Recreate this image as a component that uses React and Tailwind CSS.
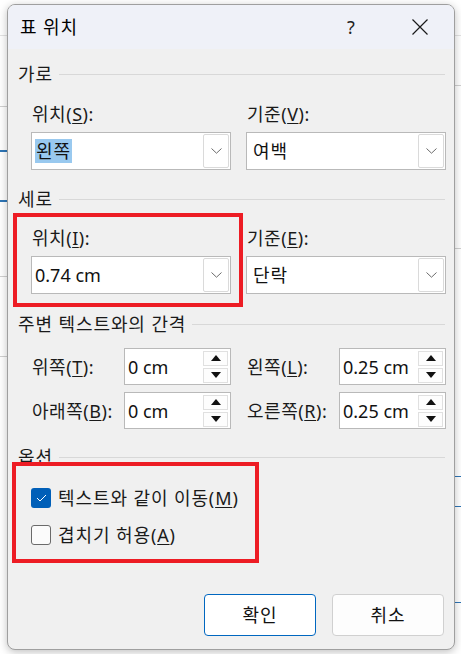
import React from "react";

const font = { fontFamily: '"Noto Sans", "Noto Sans CJK KR", sans-serif' };

const U = ({ children }) => <span className="underline underline-offset-2">{children}</span>;

const Chevron = () => (
  <svg width="11" height="6" viewBox="0 0 11 6" fill="none">
    <path d="M0.5 0.5 L5.5 5.2 L10.5 0.5" stroke="#6b6b6b" strokeWidth="1" />
  </svg>
);

const SectionHeader = ({ title, className = "" }) => (
  <div className={`flex items-center h-[24px] gap-[6px] ${className}`}>
    <span className="text-[18px] leading-none text-[#1a1a1a] tracking-[0.05em]">{title}</span>
    <div className="flex-1 h-px bg-[#d8d8d8] mt-[1px]" />
  </div>
);

const Combo = ({ value, selected, pad = "pl-[3px]", ko }) => (
  <div className="flex items-center h-[38px] w-[200px] bg-white border border-[#b9b9b9]">
    <div className={`flex-1 ${pad}`}>
      <span className={`text-[18px] leading-[24px] text-[#111] ${ko ? "tracking-[0.05em]" : ""} ${selected ? "bg-[#99c9ef] px-[1px]" : ""}`}>{value}</span>
    </div>
    <div className="flex items-center justify-center w-[26px] h-[34px] mr-[1px] border border-[#dadada] rounded-[2px] bg-white">
      <Chevron />
    </div>
  </div>
);

const Field = ({ label, children }) => (
  <div className="flex flex-col w-[200px]">
    <div className="h-[24px] pl-[1px] text-[18px] leading-[24px] text-[#1a1a1a] tracking-[0.03em]">{label}</div>
    <div className="mt-[6px]">{children}</div>
  </div>
);

const Tri = ({ up }) => (
  <svg width="10" height="6" viewBox="0 0 10 6">
    <path d={up ? "M0 6 L5 0 L10 6 Z" : "M0 0 L5 6 L10 0 Z"} fill="#111" />
  </svg>
);

const Spinner = ({ value }) => (
  <div className="flex items-center h-[37px] w-[107px] bg-white border border-[#b9b9b9]">
    <div className="flex-1 pl-[3px] text-[18px] leading-[24px] text-[#111]">{value}</div>
    <div className="flex flex-col gap-[2px] mr-[2px]">
      <div className="flex items-center justify-center w-[25px] h-[15px] border border-[#e0e0e0] bg-[#fdfdfd]">
        <Tri up />
      </div>
      <div className="flex items-center justify-center w-[25px] h-[15px] border border-[#e0e0e0] bg-[#fdfdfd]">
        <Tri />
      </div>
    </div>
  </div>
);

const SpinRow = ({ label, value }) => (
  <div className="flex items-center w-[200px]">
    <div className="w-[93px] pl-[1px] text-[18px] leading-[24px] text-[#1a1a1a] whitespace-nowrap tracking-[0.03em]">{label}</div>
    <Spinner value={value} />
  </div>
);

const Check = ({ checked, children, className = "" }) => (
  <div className={`flex items-center h-[28px] gap-[7px] ${className}`}>
    {checked ? (
      <div className="w-[20px] h-[20px] rounded-[3px] bg-[#005fb8] flex items-center justify-center">
        <svg width="11" height="8" viewBox="0 0 11 8" fill="none">
          <path d="M1 4 L4 7 L10 1" stroke="white" strokeWidth="1" />
        </svg>
      </div>
    ) : (
      <div className="w-[20px] h-[20px] rounded-[3px] border border-[#6a6a6a] bg-[#fbfbfb]" />
    )}
    <span className="text-[18px] leading-[24px] text-[#1a1a1a] tracking-[0.05em]">{children}</span>
  </div>
);

export default function App() {
  return (
    <div className="relative w-[461px] h-[654px] bg-white overflow-hidden" style={font}>
      {/* document behind the dialog */}
      <div className="absolute left-0 top-[35px] w-full h-px bg-[#e3e3e3]" />
      <div className="absolute left-0 top-[106px] w-[8px] h-px bg-[#d0d0d0]" />
      <div className="absolute left-0 top-[150px] w-[8px] h-[2px] bg-[#2e75b6]" />
      <div className="absolute left-0 top-[200px] w-[8px] h-[2px] bg-[#2e75b6]" />
      <div className="absolute left-0 top-[276px] w-[8px] h-px bg-[#d0d0d0]" />
      <div className="absolute left-0 top-[356px] w-[8px] h-px bg-[#d0d0d0]" />
      <div className="absolute right-0 top-[85px] w-[8px] h-px bg-[#d0d0d0]" />
      <div className="absolute right-0 top-[248px] w-[8px] h-px bg-[#d0d0d0]" />
      <div className="absolute right-0 top-[476px] w-[8px] h-px bg-[#2e75b6]" />
      <div className="absolute right-0 top-[506px] w-[8px] h-px bg-[#2e75b6]" />
      <div className="absolute right-0 top-[602px] w-[8px] h-px bg-[#2e75b6]" />

      {/* dialog */}
      <div className="relative ml-[7px] mt-[4px] w-[448px] h-[646px] rounded-[8px] border border-[#9f9f9f] bg-[#f0f0f0] overflow-hidden shadow-[0_2px_8px_rgba(0,0,0,0.25)]">
        <div className="flex items-center h-[44px] bg-[#eff1f8] pl-[12px]">
          <span className="text-[18px] text-black tracking-[0.05em]">표 위치</span>
          <span className="ml-auto text-[18px] text-[#222] w-[12px] text-center">?</span>
          <div className="ml-[55px] mr-[26px]">
            <svg width="16" height="16" viewBox="0 0 16 16" fill="none">
              <path d="M0.5 0.5 L15.5 15.5 M15.5 0.5 L0.5 15.5" stroke="#1a1a1a" strokeWidth="1.2" />
            </svg>
          </div>
        </div>

        <div className="pl-[10px] pr-[9px]">
          <SectionHeader title="가로" className="mt-[13px]" />
          <div className="flex gap-[15px] pl-[13px] mt-[16px]">
            <Field label={<>위치(<U>S</U>):</>}>
              <Combo value="왼쪽" selected ko />
            </Field>
            <Field label={<>기준(<U>V</U>):</>}>
              <Combo value="여백" pad="pl-[6px]" ko />
            </Field>
          </div>

          <SectionHeader title="세로" className="mt-[17px]" />
          <div className="flex gap-[15px] pl-[13px] mt-[15px]">
            <Field label={<>위치(<U>I</U>):</>}>
              <Combo value="0.74 cm" />
            </Field>
            <Field label={<>기준(<U>E</U>):</>}>
              <Combo value="단락" pad="pl-[6px]" ko />
            </Field>
          </div>

          <SectionHeader title="주변 텍스트와의 간격" className="mt-[18px]" />
          <div className="flex flex-col gap-[7px] pl-[13px] mt-[12px]">
            <div className="flex gap-[15px]">
              <SpinRow label={<>위쪽(<U>T</U>):</>} value="0 cm" />
              <SpinRow label={<>왼쪽(<U>L</U>):</>} value="0.25 cm" />
            </div>
            <div className="flex gap-[15px]">
              <SpinRow label={<>아래쪽(<U>B</U>):</>} value="0 cm" />
              <SpinRow label={<>오른쪽(<U>R</U>):</>} value="0.25 cm" />
            </div>
          </div>

          <SectionHeader title="옵션" className="mt-[16px]" />
          <div className="pl-[13px]">
            <Check checked className="mt-[15px]">텍스트와 같이 이동(<U>M</U>)</Check>
            <Check className="mt-[9px]">겹치기 허용(<U>A</U>)</Check>
          </div>

          <div className="flex justify-end gap-[16px] mt-[45px] pr-[1px]">
            <button className="w-[112px] h-[42px] rounded-[4px] border border-[#0067c0] bg-white text-[18px] text-[#111] tracking-[0.05em]">확인</button>
            <button className="w-[112px] h-[42px] rounded-[4px] border border-[#d0d0d0] bg-[#fdfdfd] text-[18px] text-[#111] tracking-[0.05em]">취소</button>
          </div>
        </div>
      </div>

      {/* red annotation boxes */}
      <div className="absolute left-[13px] top-[213px] w-[230px] h-[94px] border-[4px] border-[#ed1c24]" />
      <div className="absolute left-[12px] top-[462px] w-[247px] h-[101px] border-[4px] border-[#ed1c24]" />
    </div>
  );
}
